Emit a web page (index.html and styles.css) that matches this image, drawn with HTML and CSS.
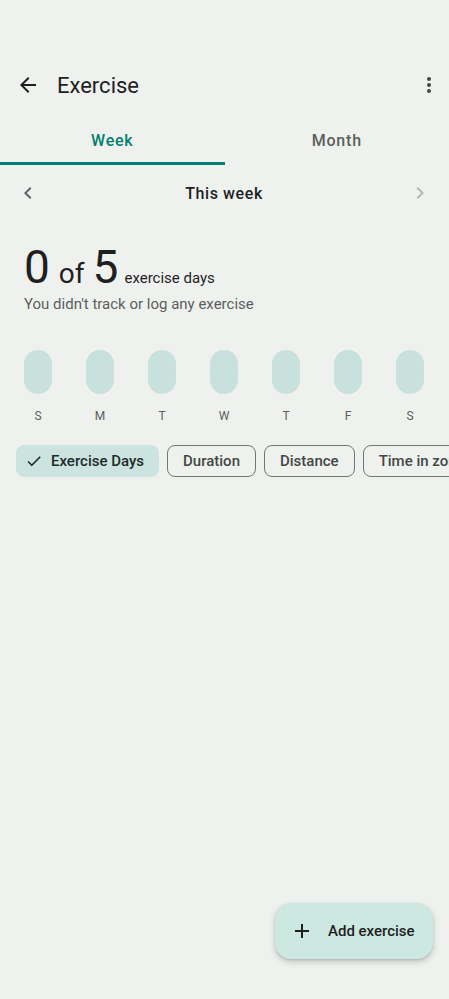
FILE: index.html
```html
<!DOCTYPE html>
<html lang="en">
<head>
    <meta charset="UTF-8">
    <meta name="viewport" content="width=device-width, initial-scale=1.0">
    <title>Exercise</title>
    <link rel="stylesheet" href="styles.css">
</head>
<body>
    <div class="screen">
        <header class="app-bar">
            <button class="icon-btn" aria-label="Back">
                <svg width="24" height="24" viewBox="0 0 24 24"><path d="M20 11H7.83l5.59-5.59L12 4l-8 8 8 8 1.41-1.41L7.83 13H20v-2z" fill="#1f1f1f"/></svg>
            </button>
            <h1>Exercise</h1>
            <button class="icon-btn more" aria-label="More">
                <svg width="24" height="24" viewBox="0 0 24 24"><circle cx="12" cy="6" r="2" fill="#444746"/><circle cx="12" cy="12" r="2" fill="#444746"/><circle cx="12" cy="18" r="2" fill="#444746"/></svg>
            </button>
        </header>

        <nav class="tabs">
            <div class="tab active">Week</div>
            <div class="tab">Month</div>
        </nav>

        <div class="week-nav">
            <svg width="24" height="24" viewBox="0 0 24 24"><path d="M15.41 7.41 14 6l-6 6 6 6 1.41-1.41L10.83 12z" fill="#5f6368"/></svg>
            <span>This week</span>
            <svg width="24" height="24" viewBox="0 0 24 24"><path d="M10 6 8.59 7.41 13.17 12l-4.58 4.59L10 18l6-6z" fill="#b4b7b5"/></svg>
        </div>

        <section class="summary">
            <div class="count">
                <span class="big">0</span>
                <span class="of">of</span>
                <span class="big">5</span>
                <span class="unit">exercise days</span>
            </div>
            <p class="note">You didn't track or log any exercise</p>
        </section>

        <div class="days">
            <div class="day"><div class="pill"></div><span>S</span></div>
            <div class="day"><div class="pill"></div><span>M</span></div>
            <div class="day"><div class="pill"></div><span>T</span></div>
            <div class="day"><div class="pill"></div><span>W</span></div>
            <div class="day"><div class="pill"></div><span>T</span></div>
            <div class="day"><div class="pill"></div><span>F</span></div>
            <div class="day"><div class="pill"></div><span>S</span></div>
        </div>

        <div class="chips">
            <div class="chip selected">
                <svg width="18" height="18" viewBox="0 0 24 24"><path d="M9 16.17 4.83 12l-1.42 1.41L9 19 21 7l-1.41-1.41z" fill="#1f1f1f"/></svg>
                Exercise Days
            </div>
            <div class="chip">Duration</div>
            <div class="chip">Distance</div>
            <div class="chip">Time in zones</div>
        </div>

        <button class="fab">
            <svg width="24" height="24" viewBox="0 0 24 24"><path d="M19 13h-6v6h-2v-6H5v-2h6V5h2v6h6v2z" fill="#1f1f1f"/></svg>
            <span>Add exercise</span>
        </button>
    </div>
</body>
</html>
```

FILE: styles.css
```css
body {
    margin: 0;
    background-color: #eff1ef;
    font-family: Roboto, "Noto Sans", sans-serif;
    color: #1f1f1f;
}
.screen {
    position: relative;
    width: 449px;
    height: 999px;
    overflow: hidden;
    padding-top: 57px;
    box-sizing: border-box;
}
.app-bar {
    display: flex;
    align-items: center;
    height: 56px;
    padding: 0 16px;
}
.icon-btn {
    display: flex;
    align-items: center;
    justify-content: center;
    width: 24px;
    height: 24px;
    padding: 0;
    border: none;
    background: none;
}
.app-bar h1 {
    flex: 1;
    margin: 0 0 0 17px;
    font-size: 22px;
    font-weight: 400;
    color: #1f1f1f;
}
.app-bar .more {
    margin-right: -8px;
}
.tabs {
    display: flex;
    margin-top: 4px;
    height: 48px;
}
.tab {
    flex: 1;
    display: flex;
    align-items: center;
    justify-content: center;
    font-size: 16px;
    font-weight: 500;
    letter-spacing: 0.8px;
    color: #5b5f5d;
    box-sizing: border-box;
    border-bottom: 3px solid transparent;
    padding-top: 2px;
}
.tab.active {
    color: #00806e;
    border-bottom-color: #00806e;
}
.week-nav {
    display: flex;
    align-items: center;
    justify-content: space-between;
    height: 56px;
    padding: 0 17px 0 16px;
    font-size: 16px;
    font-weight: 500;
    color: #1f1f1f;
}
.week-nav span {
    letter-spacing: 0.6px;
}
.summary {
    padding: 0 24px;
    margin-top: 21px;
}
.count {
    display: flex;
    align-items: baseline;
    height: 50px;
}
.count .big {
    font-size: 46px;
    font-weight: 400;
    line-height: 50px;
    letter-spacing: 2px;
}
.count .of {
    font-size: 28px;
    margin: 0 8px 0 7px;
}
.count .unit {
    font-size: 15px;
    margin-left: 4px;
}
.note {
    margin: 3px 0 0;
    font-size: 15px;
    color: #5b5f5d;
}
.days {
    display: flex;
    gap: 34px;
    padding: 0 24px;
    margin-top: 37px;
}
.day {
    display: flex;
    flex-direction: column;
    align-items: center;
    width: 28px;
}
.pill {
    width: 28px;
    height: 44px;
    border-radius: 14px;
    background-color: #c9e1dc;
}
.day span {
    margin-top: 15px;
    font-size: 12px;
    color: #5b5f5d;
}
.chips {
    display: flex;
    gap: 8px;
    padding-left: 16px;
    margin-top: 22px;
    white-space: nowrap;
}
.chip {
    display: flex;
    align-items: center;
    height: 32px;
    padding: 0 15px;
    border: 1px solid #747775;
    border-radius: 8px;
    font-size: 15px;
    font-weight: 500;
    color: #444746;
    box-sizing: border-box;
    flex-shrink: 0;
}
.chip.selected {
    border-color: #cbe4df;
    background-color: #cbe4df;
    color: #1f2b29;
    padding: 0 14px 0 8px;
    gap: 8px;
}
.fab {
    position: absolute;
    left: 275px;
    top: 903px;
    display: flex;
    align-items: center;
    gap: 14px;
    width: 158px;
    height: 56px;
    padding: 0 12px 0 15px;
    box-sizing: border-box;
    border: none;
    border-radius: 16px;
    background-color: #cde8e1;
    font-family: Roboto, "Noto Sans", sans-serif;
    font-size: 15px;
    font-weight: 500;
    color: #1f1f1f;
    white-space: nowrap;
    box-shadow: 0 3px 6px rgba(0,0,0,0.18), 0 1px 2px rgba(0,0,0,0.12);
}
```
